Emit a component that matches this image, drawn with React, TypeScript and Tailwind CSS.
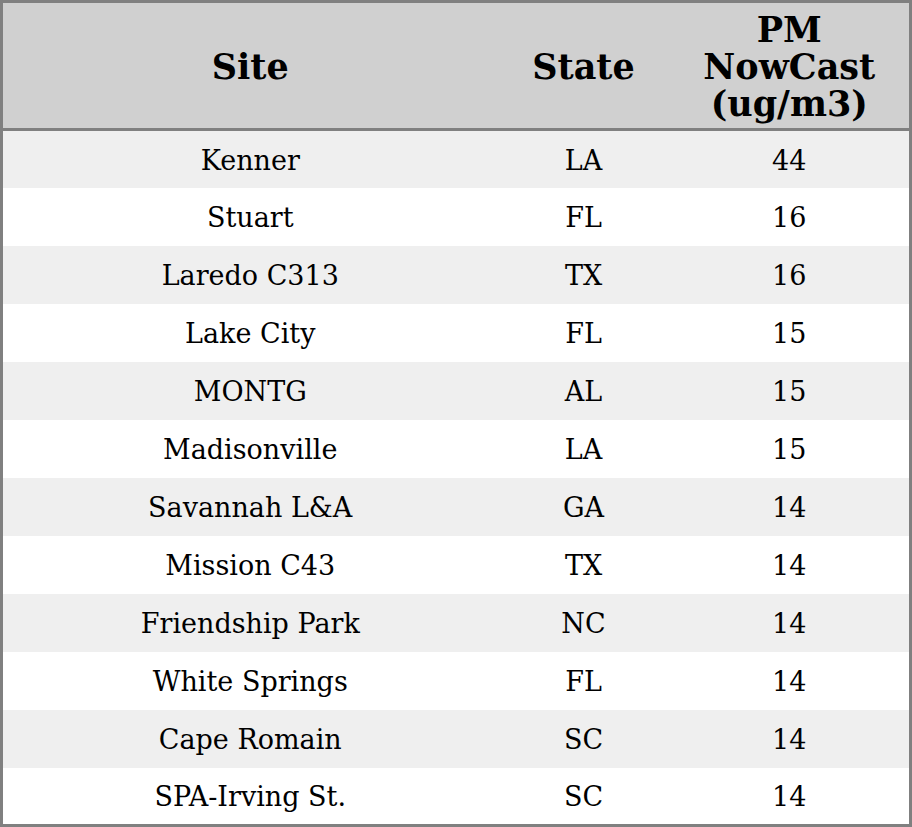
const rows: [string, string, number][] = [
  ["Kenner", "LA", 44],
  ["Stuart", "FL", 16],
  ["Laredo C313", "TX", 16],
  ["Lake City", "FL", 15],
  ["MONTG", "AL", 15],
  ["Madisonville", "LA", 15],
  ["Savannah L&A", "GA", 14],
  ["Mission C43", "TX", 14],
  ["Friendship Park", "NC", 14],
  ["White Springs", "FL", 14],
  ["Cape Romain", "SC", 14],
  ["SPA-Irving St.", "SC", 14],
];

export default function App() {
  return (
    <div className="w-[912px] h-[827px] bg-white font-['DejaVu_Serif',serif] text-black">
      <table className="w-full h-full border-collapse border-[3px] border-[#808080] table-fixed">
        <colgroup>
          <col className="w-[496px]" />
          <col className="w-[172px]" />
          <col />
        </colgroup>
        <thead>
          <tr className="h-[128px] bg-[#d0d0d0] border-b-[3px] border-[#808080]">
            <th className="text-[35px] leading-[37px] font-bold text-center pt-[2px]">Site</th>
            <th className="text-[35px] leading-[37px] font-bold text-center pt-[2px]">State</th>
            <th className="text-[35px] leading-[37px] font-bold text-center pt-[2px]">
              PM
              <br />
              NowCast
              <br />
              (ug/m3)
            </th>
          </tr>
        </thead>
        <tbody>
          {rows.map(([site, state, pm], i) => (
            <tr
              key={site}
              className={i % 2 === 0 ? "h-[58px] bg-[#efefef]" : "h-[58px] bg-white"}
            >
              <td className="text-[27px] text-center pt-[3px]">{site}</td>
              <td className="text-[27px] text-center pt-[3px]">{state}</td>
              <td className="text-[27px] text-center pt-[3px]">{pm}</td>
            </tr>
          ))}
        </tbody>
      </table>
    </div>
  );
}
